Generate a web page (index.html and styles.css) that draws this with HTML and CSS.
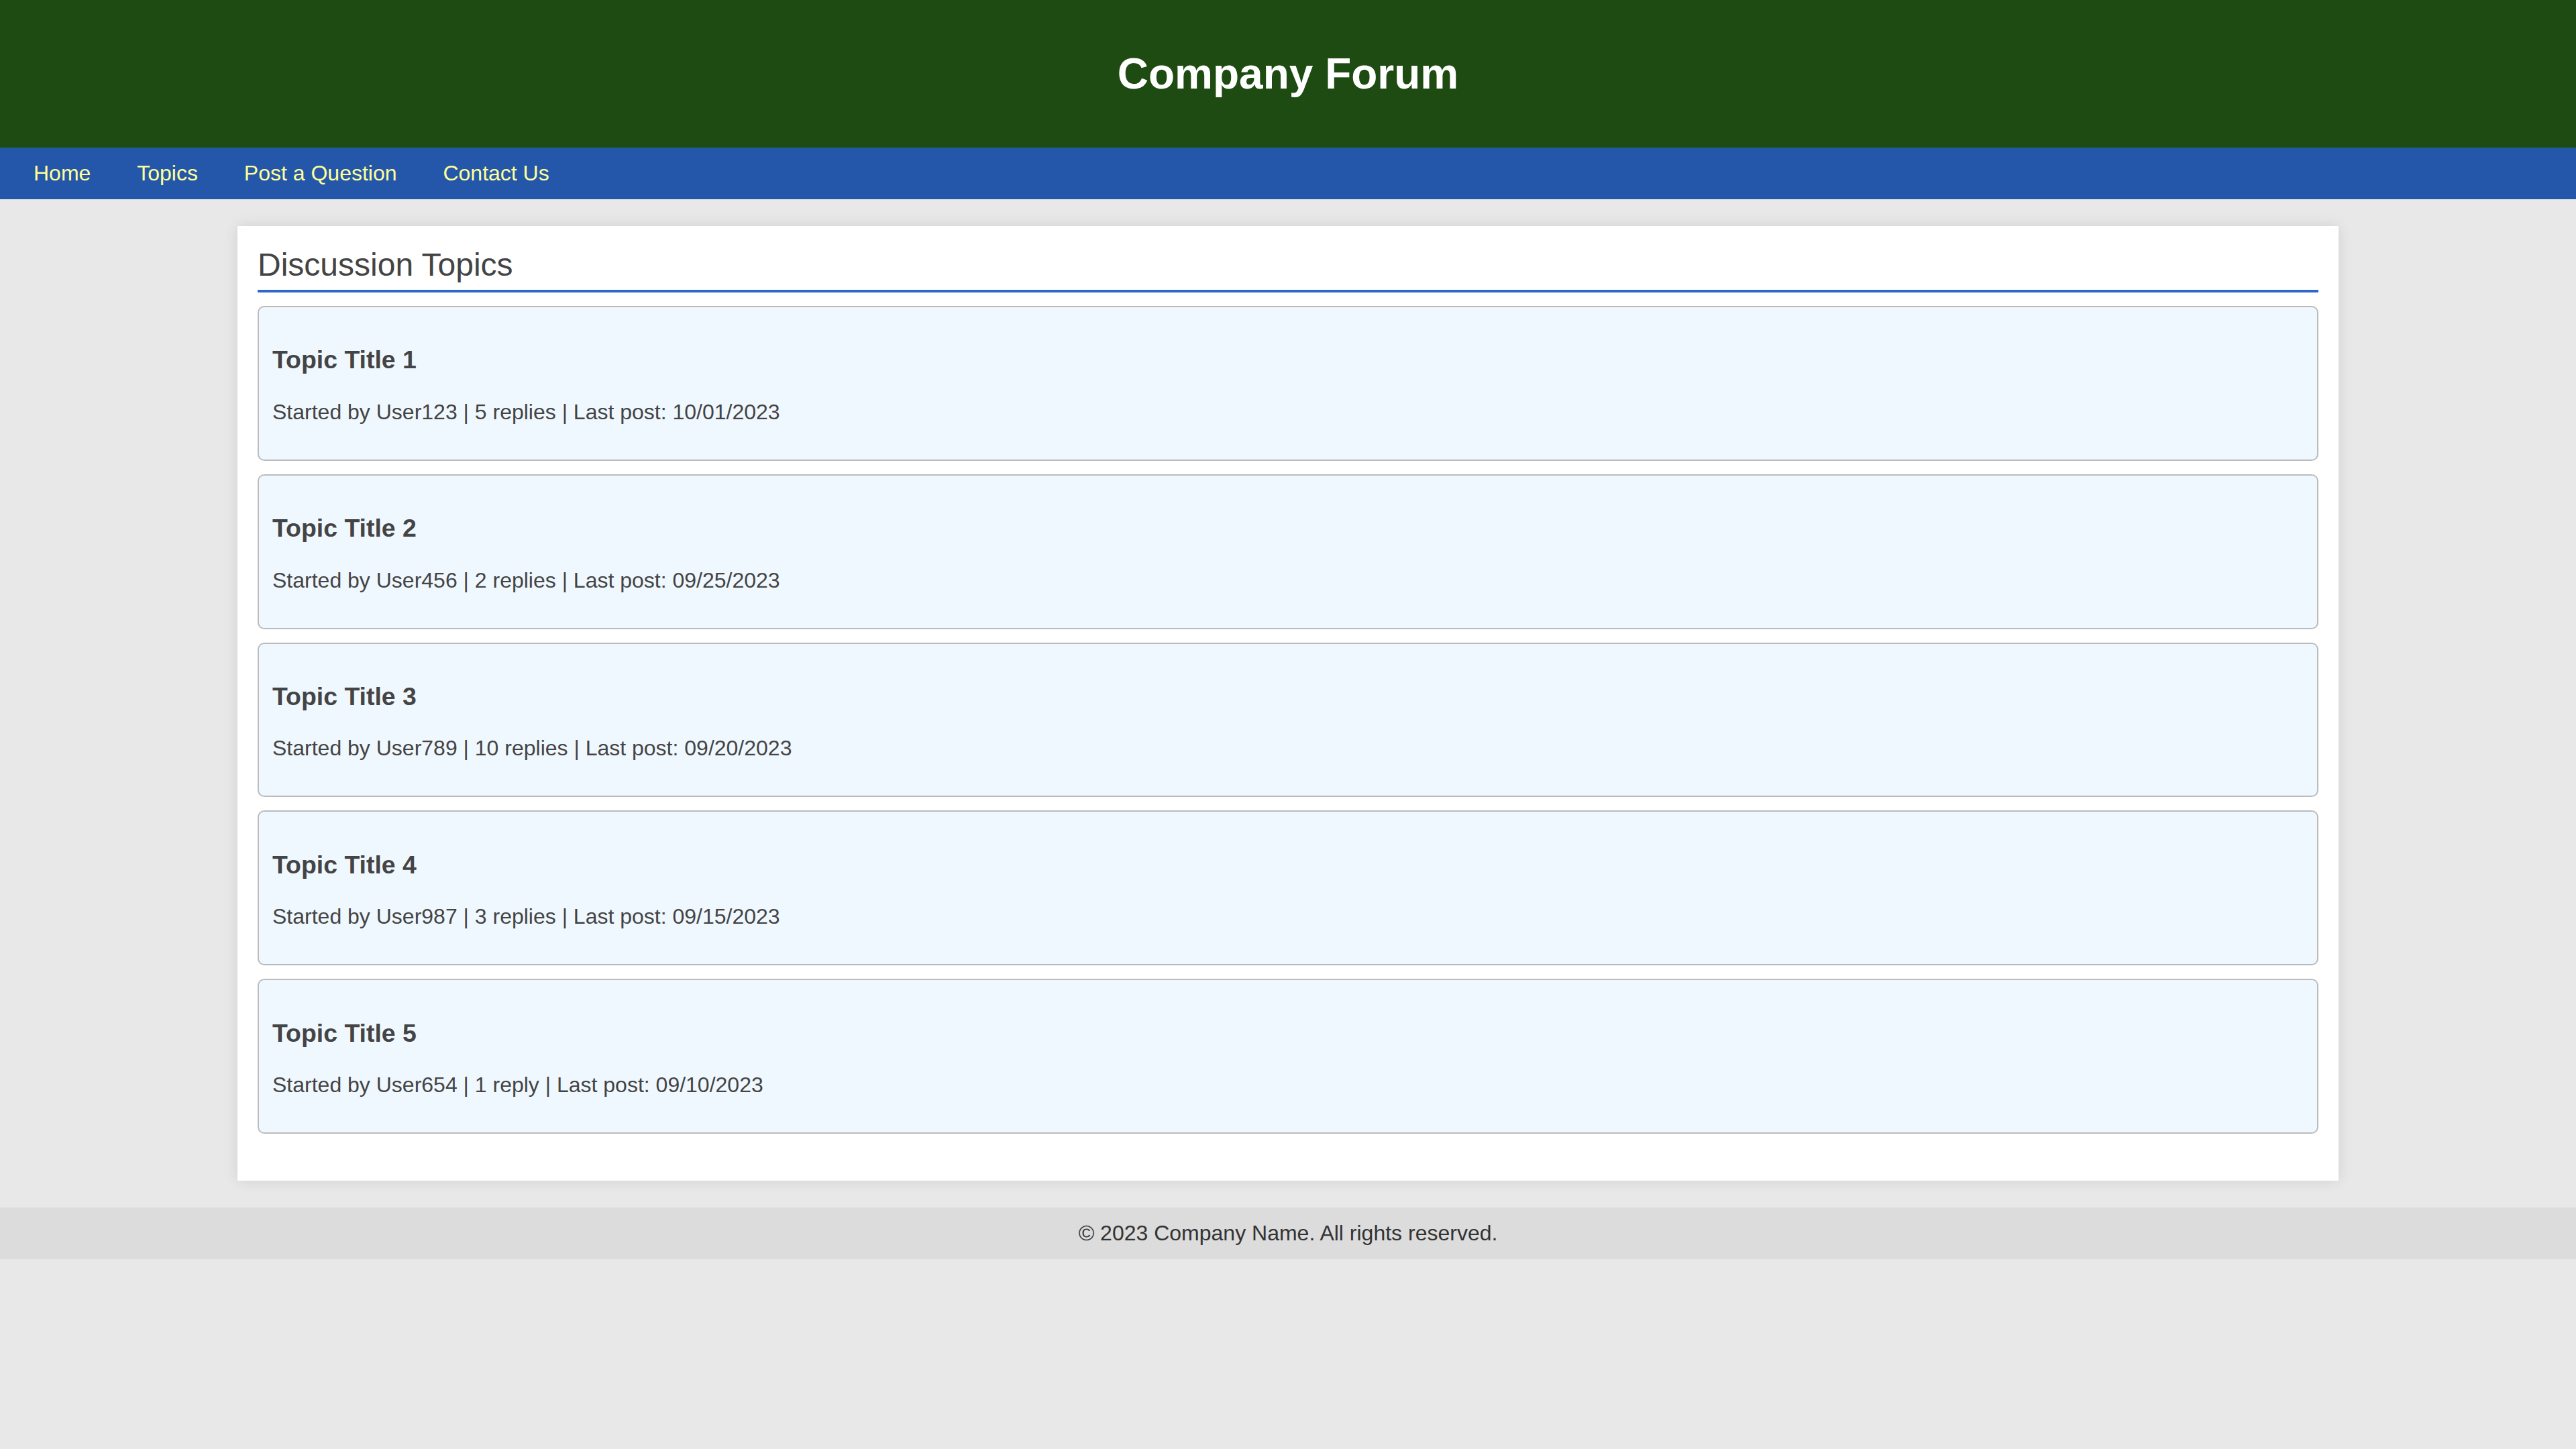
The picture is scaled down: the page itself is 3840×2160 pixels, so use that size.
FILE: index.html
```html
<!DOCTYPE html>
<html lang="en">
<head>
<meta charset="utf-8">
<title>Company Forum</title>
<link rel="stylesheet" href="styles.css">
</head>
<body>
<header class="site-header">
  <h1 class="site-title">Company Forum</h1>
</header>
<nav class="site-nav">
  <a href="#" class="nav-link">Home</a>
  <a href="#" class="nav-link">Topics</a>
  <a href="#" class="nav-link">Post a Question</a>
  <a href="#" class="nav-link">Contact Us</a>
</nav>
<main class="container">
  <h2 class="section-title">Discussion Topics</h2>
  <div class="topic">
    <h3 class="topic-title">Topic Title 1</h3>
    <p class="topic-meta">Started by User123 | 5 replies | Last post: 10/01/2023</p>
  </div>
  <div class="topic">
    <h3 class="topic-title">Topic Title 2</h3>
    <p class="topic-meta">Started by User456 | 2 replies | Last post: 09/25/2023</p>
  </div>
  <div class="topic">
    <h3 class="topic-title">Topic Title 3</h3>
    <p class="topic-meta">Started by User789 | 10 replies | Last post: 09/20/2023</p>
  </div>
  <div class="topic">
    <h3 class="topic-title">Topic Title 4</h3>
    <p class="topic-meta">Started by User987 | 3 replies | Last post: 09/15/2023</p>
  </div>
  <div class="topic">
    <h3 class="topic-title">Topic Title 5</h3>
    <p class="topic-meta">Started by User654 | 1 reply | Last post: 09/10/2023</p>
  </div>
</main>
<footer class="site-footer">
  <p class="footer-text">&copy; 2023 Company Name. All rights reserved.</p>
</footer>
</body>
</html>
```

FILE: styles.css
```css
html, body {
  margin: 0;
  padding: 0;
}
body {
  background: #e8e8e8;
  color: #333333;
  font-family: "Liberation Sans", Arial, Helvetica, sans-serif;
  font-size: 32px;
  line-height: normal;
}
.site-header {
  background: #1e4b12;
  color: #ffffff;
  padding: 30px 0;
  text-align: center;
}
.site-title {
  margin: 42.88px 0;
  font-size: 64px;
  font-weight: bold;
  line-height: normal;
}
.site-nav {
  background: #2457aa;
  padding: 20px;
}
.nav-link {
  color: #ffff99;
  text-decoration: none;
  margin: 0 30px;
  font-size: 32px;
}
.container {
  width: 80%;
  margin: 40px auto;
  padding: 30px 30px 50px;
  background: #ffffff;
  color: #444444;
  box-shadow: 0 0 20px rgba(0, 0, 0, 0.1);
}
.section-title {
  margin: 0 0 20px;
  padding-bottom: 10px;
  border-bottom: 4px solid #2c68cc;
  font-size: 48px;
  font-weight: normal;
  color: #444444;
}
.topic {
  margin: 20px 0;
  padding: 20px;
  background: #f0f8ff;
  border: 2px solid #bbbbbb;
  border-radius: 10px;
  overflow: hidden;
}
.topic-title {
  margin: 37.44px 0;
  font-size: 37.44px;
  font-weight: bold;
  color: #444444;
}
.topic-meta {
  margin: 32px 0;
  font-size: 32px;
  color: #444444;
}
.site-footer {
  background: #dcdcdc;
  text-align: center;
  padding: 20px;
}
.footer-text {
  margin: 0;
  font-size: 32px;
  color: #333333;
}
```
